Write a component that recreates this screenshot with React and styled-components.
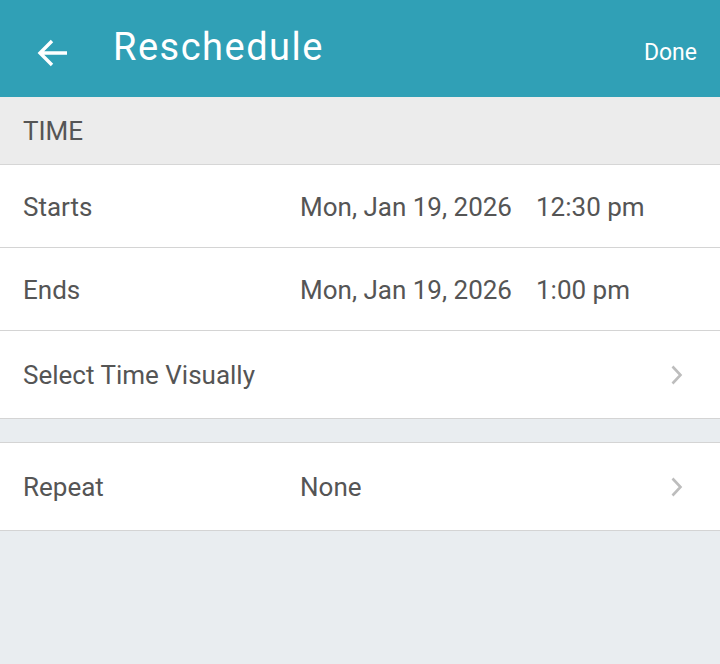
import React from "react";
import styled, { createGlobalStyle } from "styled-components";

const Global = createGlobalStyle`
  html, body { margin: 0; padding: 0; background: #e9edf0; }
  body { font-family: Roboto, "Noto Sans", sans-serif; }
`;

const Page = styled.div`
  width: 720px;
  min-height: 664px;
  background: #e9edf0;
`;

const Header = styled.header`
  height: 97px;
  background: #30a0b6;
  display: flex;
  align-items: center;
  color: #fff;
  padding: 0 23px 0 36px;
  box-sizing: border-box;
`;

const BackBtn = styled.div`
  width: 34px;
  height: 34px;
  display: flex;
  align-items: center;
  justify-content: center;
  margin-top: 8px;
`;

const Title = styled.h1`
  margin: -3px 0 0 43px;
  font-size: 38px;
  letter-spacing: 1.5px;
  font-weight: 400;
  flex: 1;
`;

const Done = styled.span`
  font-size: 23px;
  margin-top: 8px;
`;

const SectionHeader = styled.div`
  height: 67px;
  background: #ececec;
  border-bottom: 1px solid #d6d6d6;
  display: flex;
  align-items: center;
  padding-left: 23px;
  font-size: 26px;
  color: #555;
`;

const Row = styled.div`
  height: ${(p) => p.$h}px;
  background: #fff;
  border-bottom: 1px solid #d4d4d4;
  display: flex;
  align-items: center;
  padding: 1px 35px 0 23px;
  font-size: 26px;
  color: #555;
  box-sizing: border-box;
`;

const Label = styled.span`
  width: 277px;
`;

const DateText = styled.span`
  width: 236px;
`;

const Value = styled.span`
  flex: 1;
`;

const Spacer = styled.div`
  height: 23px;
  background: #e9edf0;
  border-bottom: 1px solid #d4d4d4;
`;

const Chevron = () => (
  <svg width="16" height="22" viewBox="0 0 16 22">
    <path d="M3.5 2.5 L11.5 11 L3.5 19.5" fill="none" stroke="#bdbdbd" strokeWidth="2.6" />
  </svg>
);

export default function App() {
  return (
    <Page>
      <Global />
      <Header>
        <BackBtn>
          <svg width="32" height="30" viewBox="0 0 32 30">
            <path d="M30 15 H4 M15 3 L3 15 L15 27" fill="none" stroke="#fff" strokeWidth="3.4" />
          </svg>
        </BackBtn>
        <Title>Reschedule</Title>
        <Done>Done</Done>
      </Header>
      <SectionHeader>TIME</SectionHeader>
      <Row $h={83}>
        <Label>Starts</Label>
        <DateText>Mon, Jan 19, 2026</DateText>
        <Value>12:30 pm</Value>
      </Row>
      <Row $h={83}>
        <Label>Ends</Label>
        <DateText>Mon, Jan 19, 2026</DateText>
        <Value>1:00 pm</Value>
      </Row>
      <Row $h={88}>
        <Value>Select Time Visually</Value>
        <Chevron />
      </Row>
      <Spacer />
      <Row $h={88}>
        <Label>Repeat</Label>
        <Value>None</Value>
        <Chevron />
      </Row>
    </Page>
  );
}
